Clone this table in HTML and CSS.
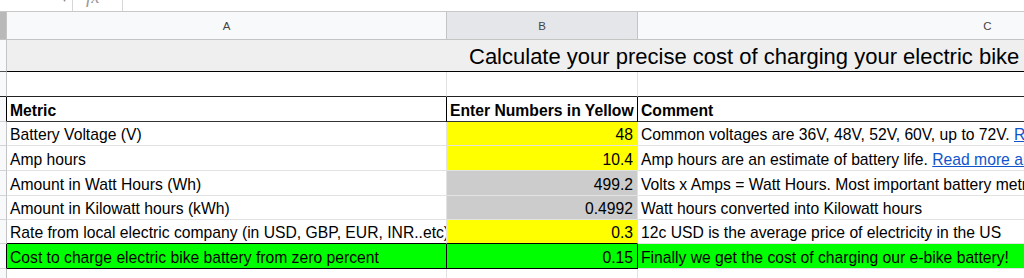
FILE: index.html
```html
<!DOCTYPE html>
<html>
<head>
<meta charset="utf-8">
<link rel="stylesheet" href="styles.css">
</head>
<body>
<div class="fbar">
  <div class="caret">▾</div>
  <div class="sep"></div>
  <div class="fx">fx</div>
  <div class="sep"></div>
</div>
<div class="row colhead">
  <div class="c g gh"></div>
  <div class="c h">A</div>
  <div class="c h sel">B</div>
  <div class="c h">C</div>
</div>
<div class="row title">
  <div class="c g"></div>
  <div class="c merged">Calculate your precise cost of charging your electric bike</div>
</div>
<div class="row r2">
  <div class="c g"></div>
  <div class="c"></div>
  <div class="c"></div>
  <div class="c"></div>
</div>
<div class="row head">
  <div class="c g"></div>
  <div class="c">Metric</div>
  <div class="c">Enter Numbers in Yellow</div>
  <div class="c">Comment</div>
</div>
<div class="row r24">
  <div class="c g"></div>
  <div class="c">Battery Voltage (V)</div>
  <div class="c num yellow">48</div>
  <div class="c">Common voltages are 36V, 48V, 52V, 60V, up to 72V.&nbsp;<a class="link">Read more about battery voltage</a></div>
</div>
<div class="row r25">
  <div class="c g"></div>
  <div class="c">Amp hours</div>
  <div class="c num yellow">10.4</div>
  <div class="c">Amp hours are an estimate of battery life.&nbsp;<a class="link">Read more about amp hours</a></div>
</div>
<div class="row r25">
  <div class="c g"></div>
  <div class="c">Amount in Watt Hours (Wh)</div>
  <div class="c num grey">499.2</div>
  <div class="c">Volts x Amps = Watt Hours. Most important battery metric</div>
</div>
<div class="row r24">
  <div class="c g"></div>
  <div class="c">Amount in Kilowatt hours (kWh)</div>
  <div class="c num grey">0.4992</div>
  <div class="c">Watt hours converted into Kilowatt hours</div>
</div>
<div class="row r24 before-cost">
  <div class="c g"></div>
  <div class="c">Rate from local electric company (in USD, GBP, EUR, INR..etc)</div>
  <div class="c num yellow">0.3</div>
  <div class="c">12c USD is the average price of electricity in the US</div>
</div>
<div class="row r25 cost">
  <div class="c g"></div>
  <div class="c green">Cost to charge electric bike battery from zero percent</div>
  <div class="c num green">0.15</div>
  <div class="c green">Finally we get the cost of charging our e-bike battery!</div>
</div>
<div class="row blank">
  <div class="c g"></div>
  <div class="c"></div>
  <div class="c"></div>
  <div class="c"></div>
</div>
</body>
</html>
```
FILE: styles.css
```css
html, body {
  margin: 0;
  padding: 0;
}
body {
  width: 1024px;
  height: 278px;
  overflow: hidden;
  background: #ffffff;
  font-family: "Liberation Sans", Arial, sans-serif;
  color: #000;
}

/* formula bar (cut off at top) */
.fbar {
  height: 11px;
  border-bottom: 1px solid #c8c8c8;
  display: flex;
  align-items: stretch;
  padding-left: 56px;
  overflow: hidden;
}
.caret {
  width: 16px;
  font-size: 10px;
  line-height: 10px;
  color: #888;
  margin-top: -6px;
  text-align: center;
}
.sep {
  width: 1px;
  background: #d6d6d6;
}
.fx {
  width: 49px;
  padding-left: 13px;
  box-sizing: border-box;
  font-family: "Liberation Serif", serif;
  font-style: italic;
  font-size: 19px;
  line-height: 19px;
  color: #9a9a9a;
  margin-top: -13px;
}

/* rows */
.row {
  display: grid;
  grid-template-columns: 7px 440px 191px 700px;
  box-sizing: border-box;
}
.c {
  box-sizing: border-box;
  border-right: 1px solid #e2e2e2;
  border-bottom: 1px solid #e2e2e2;
  display: flex;
  align-items: flex-end;
  white-space: nowrap;
  overflow: hidden;
  padding: 0 4px 1px 3px;
  font-size: 15.7px;
  line-height: 18px;
}
.g {
  background: #f8f9fa;
  border-right-color: #c4c4c4;
  border-bottom-color: #d4d4d4;
  padding: 0;
}

/* column header */
.colhead { height: 28px; }
.colhead .c {
  background: #f8f9fa;
  border-right-color: #c4c4c4;
  border-bottom-color: #c4c4c4;
  justify-content: center;
  align-items: center;
  font-size: 11.5px;
  line-height: 14px;
  color: #444;
  padding: 1px 0 0 0;
}
.colhead .gh { background: #b9b9b9; }
.colhead .sel { background: #e4e6e9; }

/* title row */
.title { height: 32px; }
.title .c {
  background: #efefef;
  border-bottom: 1px solid #000;
}
.title .g { background: #f8f9fa; border-bottom-color: #555; }
.merged {
  grid-column: 2 / 5;
  font-size: 22px;
  line-height: 26px;
  padding-left: 462px;
  padding-bottom: 1px;
  border-right: none;
}

.r2 { height: 25px; }
.r2 .c { border-bottom: 1px solid #222; }

.head { height: 25px; }
.head .c {
  font-weight: bold;
  border-right-color: #000;
  border-bottom-color: #333;
}
.head .g { border-bottom-color: #d4d4d4; }
.head .c:nth-child(3) { padding-right: 1px; }

.r24 { height: 24px; }
.r25 { height: 25px; }
.blank { height: 10px; }

.num { justify-content: flex-end; }
.yellow { background: #ffff00; }
.grey { background: #cccccc; }
.green { background: #00ff00; }

.before-cost .c:nth-child(2),
.before-cost .c:nth-child(3) { border-bottom-color: #000; }

.cost .g { border-right-color: #000; }
.cost .c:nth-child(2),
.cost .c:nth-child(3) {
  border-right-color: #000;
  border-bottom-color: #000;
}

.link {
  color: #1155cc;
  text-decoration: underline;
}
```
